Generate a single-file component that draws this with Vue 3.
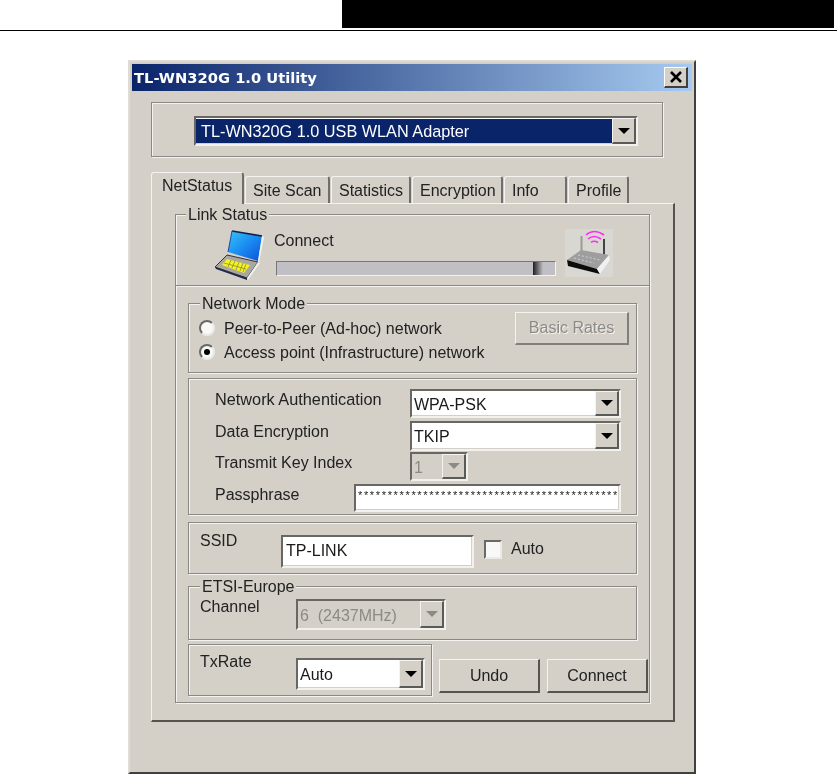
<script setup>
const tabs = [
  { label: 'NetStatus', width: 93, active: true },
  { label: 'Site Scan', width: 85 },
  { label: 'Statistics', width: 80 },
  { label: 'Encryption', width: 91 },
  { label: 'Info', width: 63 },
  { label: 'Profile', width: 61 }
]
const passphrase = '*'.repeat(44)
</script>

<template>
  <div class="page">
    <div class="header"><div class="bar"></div></div>
    <div class="rule"></div>

    <div class="window">
      <div class="titlebar">
        <span class="title">TL-WN320G 1.0 Utility</span>
        <span class="close">
          <svg width="14" height="12" viewBox="0 0 14 12"><path d="M2 1 L12 11 M12 1 L2 11" stroke="#000" stroke-width="2.6" fill="none" /></svg>
        </span>
      </div>

      <div class="group adapter">
        <div class="combo adapter-combo">
          <span class="val selected">TL-WN320G 1.0 USB WLAN Adapter</span>
          <span class="arrow"><i class="tri"></i></span>
        </div>
      </div>

      <div class="tabs">
        <div
          v-for="t in tabs"
          :key="t.label"
          class="tab"
          :class="{ active: t.active }"
          :style="{ width: t.width + 'px' }"
        >{{ t.label }}</div>
      </div>

      <div class="panel">
        <div class="group outer">
          <span class="legend link-legend">Link Status</span>

          <div class="link">
            <svg class="laptop" width="55" height="58" viewBox="0 0 55 58">
              <defs>
                <linearGradient id="scr" x1="0" y1="0" x2="1" y2="1">
                  <stop offset="0" stop-color="#38c4f6" />
                  <stop offset="0.5" stop-color="#1a8cf2" />
                  <stop offset="1" stop-color="#0c50d8" />
                </linearGradient>
              </defs>
              <path d="M22 9 L52 14 L48 39 L18 30 Z" fill="url(#scr)" />
              <path d="M22 9 L52 14" stroke="#14204e" stroke-width="1.6" fill="none" />
              <path d="M22 9 L18 30" stroke="#1b4aa8" stroke-width="1" fill="none" />
              <path d="M52 14 L54 15 L49 41 L48 39 Z" fill="#f2f2f2" />
              <path d="M5 45 L17 33 L48 40 L37 56 Z" fill="#a9a79f" stroke="#333" stroke-width="1" />
              <path d="M17 37 L40 43 L34 51 L12 43 Z" fill="#f4f41c" />
              <path d="M21 38 L18 45 M25 39 L22 46 M29 40 L26 48 M33 41 L30 49 M36 42 L33 50 M14 41 L36 47" stroke="#8a8a40" stroke-width="0.8" fill="none" />
              <path d="M5 45 L37 56 L37 58 L6 47 Z" fill="#20284a" />
              <path d="M37 56 L48 40 L50 41 L38 58 Z" fill="#f0f0f0" />
            </svg>

            <div class="status">
              <div class="status-text">Connect</div>
              <div class="progress"><div class="fill"></div></div>
            </div>

            <div class="router-box">
              <svg width="48" height="48" viewBox="41 7 48 48">
                <path d="M62 13 Q70 6 80 13" stroke="#ff2df0" stroke-width="1.6" fill="none" />
                <path d="M64 17 Q70 12 77 17" stroke="#ff2df0" stroke-width="1.6" fill="none" />
                <path d="M67 20.5 Q70 18 74 20.5" stroke="#ff2df0" stroke-width="1.6" fill="none" />
                <path d="M57.5 14 L57.5 32" stroke="#9b9b9b" stroke-width="2" />
                <path d="M80 17 L80 34" stroke="#444" stroke-width="2" />
                <path d="M43 38 L57 28 L85 33 L73 47 Z" fill="#9e9e9e" />
                <path d="M50 36 L70 41 M54 33 L76 38" stroke="#d0d0d0" stroke-width="1" stroke-dasharray="2 2" />
                <path d="M43 38 L73 47 L76 52 L44 44 Z" fill="#0b0b0b" />
                <path d="M73 47 L85 33 L86 38 L76 52 Z" fill="#f0f0f0" />
              </svg>
            </div>
          </div>

          <div class="stack">
            <div class="group mode">
              <span class="legend">Network Mode</span>
              <div class="radios">
                <label class="radio-row"><span class="radio"></span><span class="radio-text">Peer-to-Peer (Ad-hoc) network</span></label>
                <label class="radio-row"><span class="radio on"></span><span class="radio-text">Access point (Infrastructure) network</span></label>
              </div>
              <div class="btn basic disabled">Basic Rates</div>
            </div>

            <div class="group security">
              <div class="row row-a">
                <span class="lbl">Network Authentication</span>
                <div class="combo sec-combo h29">
                  <span class="val">WPA-PSK</span>
                  <span class="arrow"><i class="tri"></i></span>
                </div>
              </div>
              <div class="row row-b">
                <span class="lbl">Data Encryption</span>
                <div class="combo sec-combo h30">
                  <span class="val">TKIP</span>
                  <span class="arrow"><i class="tri"></i></span>
                </div>
              </div>
              <div class="row row-c">
                <span class="lbl">Transmit Key Index</span>
                <div class="combo key-combo off">
                  <span class="val">1</span>
                  <span class="arrow"><i class="tri"></i></span>
                </div>
              </div>
              <div class="row row-d">
                <span class="lbl">Passphrase</span>
                <div class="field pass">{{ passphrase }}</div>
              </div>
            </div>

            <div class="group ssid">
              <span class="lbl ssid-lbl">SSID</span>
              <div class="field ssid-field">TP-LINK</div>
              <span class="check"></span>
              <span class="check-text">Auto</span>
            </div>

            <div class="group etsi">
              <span class="legend">ETSI-Europe</span>
              <span class="lbl channel-lbl">Channel</span>
              <div class="combo channel-combo off">
                <span class="val">6&nbsp; (2437MHz)</span>
                <span class="arrow"><i class="tri"></i></span>
              </div>
            </div>

            <div class="last">
              <div class="group txrate">
                <span class="lbl tx-lbl">TxRate</span>
                <div class="combo tx-combo">
                  <span class="val">Auto</span>
                  <span class="arrow"><i class="tri"></i></span>
                </div>
              </div>
              <div class="actions">
                <div class="btn action">Undo</div>
                <div class="btn action">Connect</div>
              </div>
            </div>
          </div>
        </div>
      </div>
    </div>
  </div>
</template>

<style>
html, body { margin: 0; background: #fff; }
</style>

<style scoped>
.page {
  width: 837px;
  height: 776px;
  overflow: hidden;
  background: #fff;
  font-family: "Liberation Sans", Arial, sans-serif;
  font-size: 16px;
  line-height: 20px;
  color: #222;
}
.header { height: 28px; display: flex; justify-content: flex-end; padding-right: 3px; }
.bar { width: 492px; background: #000; }
.rule { height: 1px; margin-top: 2px; background: #000; }

.window {
  box-sizing: border-box;
  width: 568px;
  height: 714px;
  margin: 29px 0 0 128px;
  padding: 2px;
  background: #d4d0c8;
  border-style: solid;
  border-width: 2px;
  border-color: #dedcd7 #404040 #404040 #dedcd7;
  filter: blur(0.45px);
}
.titlebar {
  height: 27px;
  display: flex;
  align-items: center;
  justify-content: space-between;
  padding: 0 4px 0 2px;
  background: linear-gradient(90deg, #0a246a, #a6caf0);
}
.title {
  font-family: "DejaVu Sans", sans-serif;
  font-weight: 700;
  font-size: 14.7px;
  color: #fff;
}
.close {
  box-sizing: border-box;
  width: 24px;
  height: 21px;
  display: flex;
  align-items: center;
  justify-content: center;
  background: #d4d0c8;
  border-style: solid;
  border-width: 1px 2px 2px 1px;
  border-color: #fff #404040 #404040 #fff;
}

.group {
  box-sizing: border-box;
  position: relative;
  border: 1px solid #8a8884;
  box-shadow: inset 1px 1px 0 #f4f3f0, 1px 1px 0 #f4f3f0;
}
.legend {
  position: absolute;
  top: -10px;
  left: 11px;
  padding: 0 2px;
  background: #d4d0c8;
}

.adapter {
  width: 512px;
  height: 55px;
  margin: 11px 0 0 19px;
  padding: 13px 0 0 42px;
}

.combo {
  box-sizing: border-box;
  display: flex;
  align-items: stretch;
  background: #fff;
  border-style: solid;
  border-width: 2px;
  border-color: #686763 #f2f1ee #f2f1ee #686763;
  box-shadow: inset -1px -1px 0 #d4d0c8;
}
.val {
  flex: 1;
  min-width: 0;
  display: flex;
  align-items: center;
  padding: 2px 0 0 2px;
  white-space: nowrap;
  color: #1a1a1a;
}
.selected {
  background: #0a246a;
  color: #fff;
  margin: 1px 0;
  padding: 0 0 0 5px;
  font-size: 16.25px;
}
.arrow {
  box-sizing: border-box;
  width: 24px;
  display: flex;
  align-items: center;
  justify-content: center;
  background: #d4d0c8;
  border-style: solid;
  border-width: 1px 2px 2px 1px;
  border-color: #f4f3f0 #5a5a57 #5a5a57 #f4f3f0;
}
.tri {
  width: 0;
  height: 0;
  border-left: 6px solid transparent;
  border-right: 6px solid transparent;
  border-top: 6px solid #000;
}
.off { background: #d4d0c8; }
.off .val { color: #8c8a86; }
.off .tri { border-top-color: #8c8a86; }

.adapter-combo { width: 444px; height: 30px; }

.tabs {
  position: relative;
  z-index: 1;
  display: flex;
  align-items: flex-end;
  gap: 1px;
  height: 31px;
  margin: 15px 0 0 19px;
}
.tab {
  box-sizing: border-box;
  height: 27px;
  padding: 4px 0 0 7px;
  background: #d4d0c8;
  white-space: nowrap;
  border-style: solid;
  border-width: 1px 2px 0 1px;
  border-color: #f4f3f0 #6f6e6a #d4d0c8 #f4f3f0;
  border-radius: 3px 3px 0 0;
}
.tab.active {
  height: 32px;
  margin-bottom: -1px;
  padding: 3px 0 0 10px;
}

.panel {
  box-sizing: border-box;
  width: 524px;
  height: 519px;
  margin-left: 19px;
  padding: 10px 0 0 23px;
  border-style: solid;
  border-width: 1px 2px 2px 1px;
  border-color: #f4f3f0 #55544f #55544f #f4f3f0;
}
.outer { width: 475px; height: 489px; }
.link-legend { left: 10px; }

.link {
  box-sizing: border-box;
  height: 71px;
  display: flex;
  padding: 7px 0 0 34px;
  border-bottom: 1px solid #8a8884;
  box-shadow: 0 1px 0 #f4f3f0;
}
.laptop { flex: none; }
.status { width: 281px; margin-left: 9px; padding-top: 8px; }
.status-text { height: 22px; line-height: 22px; }
.progress {
  box-sizing: border-box;
  width: 280px;
  height: 15px;
  margin: 9px 0 0 2px;
  display: flex;
  justify-content: flex-end;
  padding-right: 12px;
  background: #c0bfc3;
  border-style: solid;
  border-width: 1px;
  border-color: #77767a #f4f3f0 #f4f3f0 #77767a;
}
.fill { width: 10px; background: linear-gradient(90deg, #1e1e1e, #c0bfc3); }
.router-box {
  width: 48px;
  height: 48px;
  margin: 7px 0 0 10px;
  background: #d9d7d2;
}

.stack { padding: 17px 0 0 12px; }

.mode {
  width: 449px;
  height: 70px;
  display: flex;
  justify-content: space-between;
  padding: 8px 7px 0 10px;
}
.radios { padding-top: 4px; }
.radio-row { display: flex; align-items: center; height: 24px; }
.radio-text { margin-top: 2px; }
.radio {
  box-sizing: border-box;
  width: 16px;
  height: 16px;
  margin-right: 9px;
  display: flex;
  align-items: center;
  justify-content: center;
  background: #f8f8f6;
  border-radius: 50%;
  border: 2px solid;
  border-color: #6a6966 #eceae6 #eceae6 #6a6966;
}
.radio.on::after {
  content: "";
  width: 6px;
  height: 6px;
  border-radius: 50%;
  background: #000;
}

.btn {
  box-sizing: border-box;
  display: flex;
  align-items: center;
  justify-content: center;
  background: #d4d0c8;
  border-style: solid;
  border-width: 1px 2px 2px 1px;
  border-color: #f4f3f0 #55544f #55544f #f4f3f0;
}
.basic { width: 114px; height: 33px; border-color: #f4f3f0 #807f7b #807f7b #f4f3f0; }
.disabled { color: #8c8a86; text-shadow: 1px 1px 0 #f4f3f0; }

.security {
  width: 449px;
  height: 137px;
  margin-top: 5px;
  padding: 10px 15px 0 26px;
}
.lbl { line-height: 22px; }
.row { display: flex; align-items: flex-start; justify-content: space-between; }
.row-a .lbl { font-size: 16.3px; line-height: 20px; }
.row-b, .row-d { margin-top: 3px; }
.row-c { margin-top: 1px; }
.sec-combo { width: 211px; }
.h29 { height: 29px; }
.h30 { height: 30px; }
.key-combo { width: 58px; height: 29px; margin-right: 153px; }
.field {
  box-sizing: border-box;
  background: #fff;
  white-space: nowrap;
  overflow: hidden;
  color: #1a1a1a;
  border-style: solid;
  border-width: 2px;
  border-color: #686763 #f2f1ee #f2f1ee #686763;
  box-shadow: inset -1px -1px 0 #d4d0c8;
}
.pass {
  width: 267px;
  height: 28px;
  padding: 1px 0 0 2px;
  font-size: 11px;
  letter-spacing: 1.65px;
  line-height: 16px;
}

.ssid {
  width: 449px;
  height: 52px;
  margin-top: 7px;
  display: flex;
  align-items: flex-start;
  padding: 7px 0 0 11px;
}
.ssid-lbl { width: 81px; }
.ssid-field {
  width: 193px;
  height: 33px;
  margin-top: 5px;
  padding: 4px 0 0 3px;
}
.check {
  box-sizing: border-box;
  width: 18px;
  height: 19px;
  margin: 10px 0 0 10px;
  background: #f8f8f6;
  border-style: solid;
  border-width: 2px;
  border-color: #6a6966 #eceae6 #eceae6 #6a6966;
}
.check-text { margin: 9px 0 0 9px; }

.etsi {
  width: 449px;
  height: 54px;
  margin-top: 12px;
  display: flex;
  align-items: flex-start;
  padding: 9px 0 0 11px;
}
.channel-lbl { width: 96px; }
.channel-combo { width: 150px; height: 31px; margin-top: 3px; }

.last { display: flex; margin-top: 4px; }
.txrate {
  width: 244px;
  height: 52px;
  display: flex;
  align-items: flex-start;
  padding: 6px 0 0 11px;
}
.tx-lbl { width: 96px; }
.tx-combo { width: 129px; height: 32px; margin-top: 7px; }
.actions { display: flex; gap: 7px; margin: 15px 0 0 7px; }
.action { width: 101px; height: 34px; }
</style>
